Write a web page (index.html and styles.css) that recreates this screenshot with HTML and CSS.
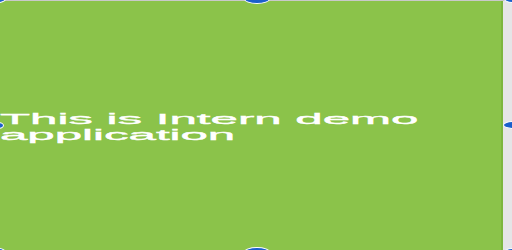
FILE: index.html
```html
<!DOCTYPE html>
<html>
<head>
<meta charset="utf-8">
<link rel="stylesheet" href="styles.css">
</head>
<body>
<div class="stage">
  <div class="panel">
    <p class="title">This is Intern demo<br>application</p>
  </div>
  <span class="handle h-tl"></span>
  <span class="handle h-tm"></span>
  <span class="handle h-tr"></span>
  <span class="handle h-ml"></span>
  <span class="handle h-mr"></span>
  <span class="handle h-bl"></span>
  <span class="handle h-bm"></span>
  <span class="handle h-br"></span>
</div>
</body>
</html>
```
FILE: styles.css
```css
html, body {
  margin: 0;
  padding: 0;
  width: 512px;
  height: 250px;
  overflow: hidden;
  background: #e5e5e7;
}
.stage {
  position: relative;
  width: 512px;
  height: 250px;
  border-top: 1px solid #c9c9c9;
  box-sizing: border-box;
  display: flex;
}
.panel {
  width: 503px;
  height: 249px;
  box-sizing: border-box;
  background: #8bc34a;
  border-right: 2px solid #7cb63e;
  display: flex;
  align-items: center;
}
.title {
  margin: 0;
  padding-top: 3px;
  font-family: "Liberation Sans", Arial, sans-serif;
  font-size: 15px;
  line-height: 16px;
  color: #ffffff;
  -webkit-text-stroke: 0.35px #ffffff;
  white-space: nowrap;
  transform: scaleX(3.28);
  transform-origin: left center;
}
.handle {
  position: absolute;
  background: #1a5fcc;
  border: 1.5px solid #ffffff;
  border-radius: 50%;
  box-sizing: border-box;
}
.h-tm, .h-bm {
  width: 26px;
  height: 10px;
  left: 244px;
}
.h-tm { top: -7px; }
.h-bm { bottom: -7px; }
.h-tl, .h-bl {
  width: 16px;
  height: 8px;
  left: -10px;
}
.h-tl { top: -6px; }
.h-bl { bottom: -6px; }
.h-tr, .h-br {
  width: 16px;
  height: 8px;
  right: -8px;
}
.h-tr { top: -6px; }
.h-br { bottom: -6px; }
.h-ml {
  width: 12px;
  height: 7px;
  left: -8px;
  top: 121px;
}
.h-mr {
  width: 20px;
  height: 8px;
  right: -11px;
  top: 120px;
}
```
